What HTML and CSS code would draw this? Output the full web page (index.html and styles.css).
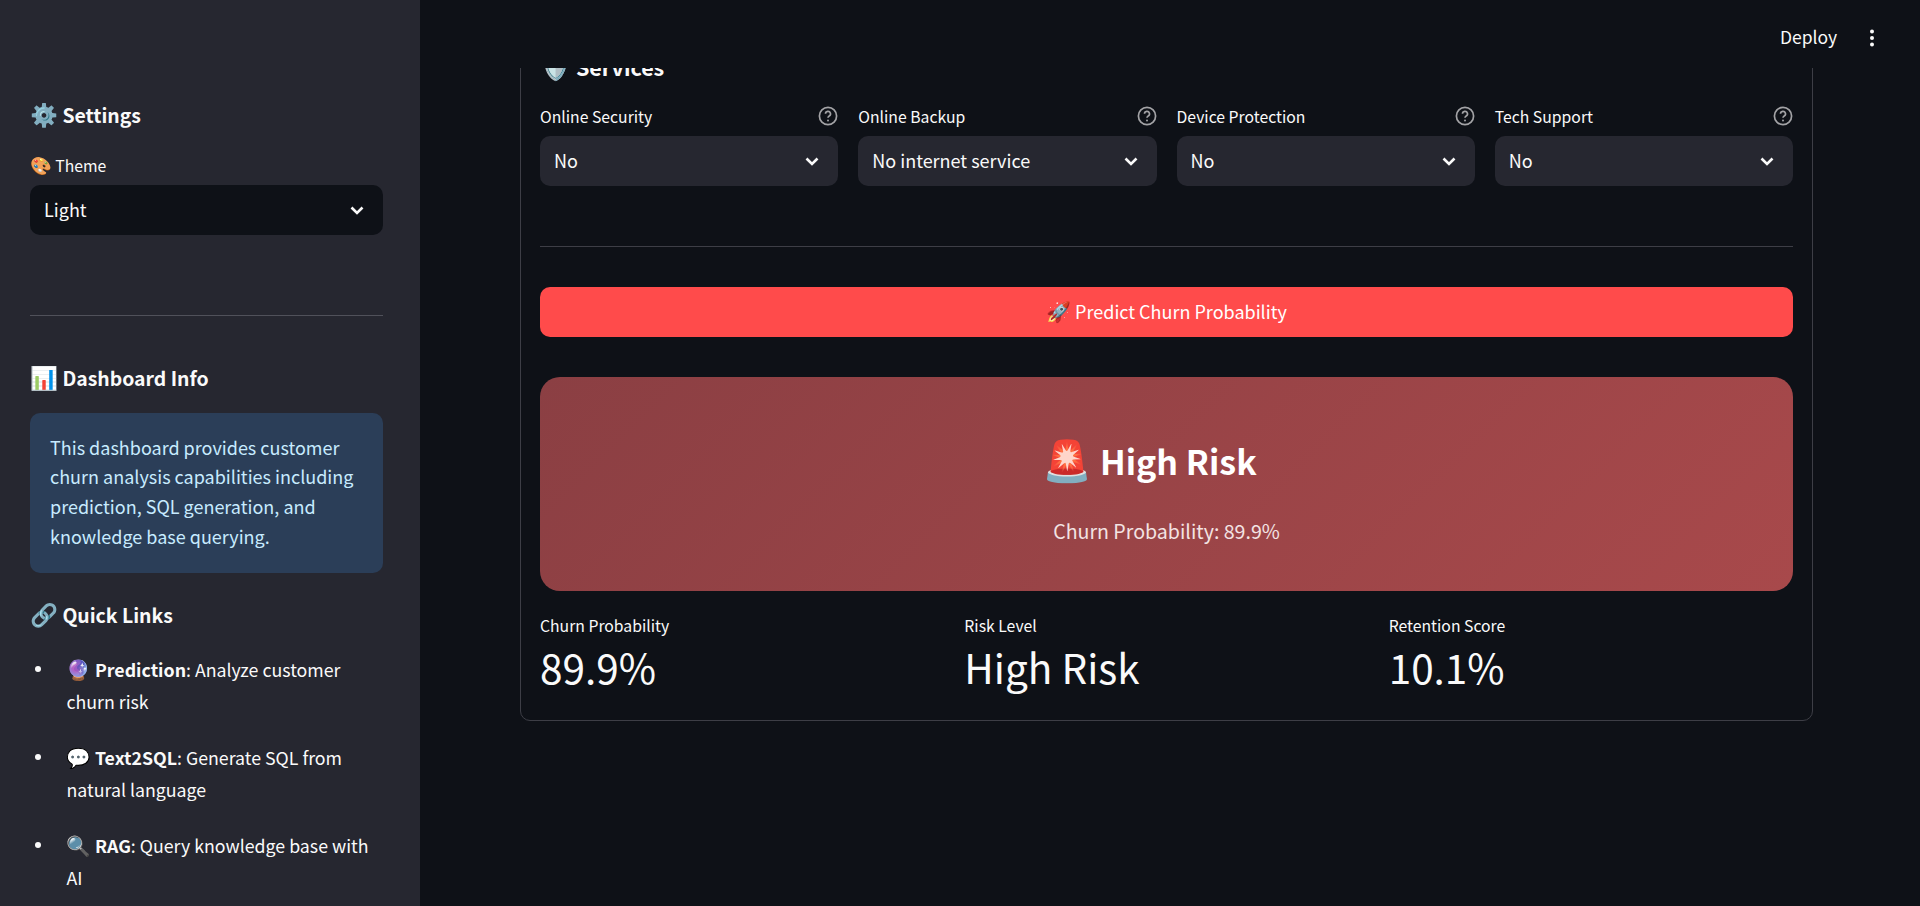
FILE: index.html
```html
<!DOCTYPE html>
<html lang="en">
<head>
<meta charset="utf-8">
<title>Customer Churn Dashboard</title>
<link rel="stylesheet" href="styles.css">
</head>
<body>
<div class="app">
  <aside class="sidebar">
    <h3 class="side-heading first"><span class="emoji">⚙️</span> Settings</h3>
    <label class="side-label"><span class="emoji">🎨</span> Theme</label>
    <div class="select select-dark"><span>Light</span>
      <svg class="chev" viewBox="0 0 24 24"><path d="M6.5 9.5 12 15l5.5-5.5"/></svg></div>
    <hr class="side-rule">
    <h3 class="side-heading"><span class="emoji">📊</span> Dashboard Info</h3>
    <div class="info">This dashboard provides customer churn analysis capabilities including prediction, SQL generation, and knowledge base querying.</div>
    <h3 class="side-heading links"><span class="emoji">🔗</span> Quick Links</h3>
    <ul class="links-list">
      <li><span class="emoji">🔮</span> <strong>Prediction</strong>: Analyze customer churn risk</li>
      <li><span class="emoji">💬</span> <strong>Text2SQL</strong>: Generate SQL from natural language</li>
      <li><span class="emoji">🔍</span> <strong>RAG</strong>: Query knowledge base with AI</li>
    </ul>
  </aside>
  <main class="main">
    <header class="topbar">
      <span class="deploy">Deploy</span>
      <svg class="kebab" viewBox="0 0 6 20"><circle cx="3" cy="3.5" r="2"/><circle cx="3" cy="10" r="2"/><circle cx="3" cy="16.5" r="2"/></svg>
    </header>
    <section class="card">
      <h3 class="services"><span class="emoji">🛡️</span> Services</h3>
      <div class="fields">
        <div class="field">
          <div class="field-label"><span>Online Security</span><svg class="help" viewBox="0 0 20 20"><circle cx="10" cy="10" r="8.6"/><path d="M7.5 7.8a2.5 2.5 0 1 1 3.7 2.2c-.8.5-1.2 1-1.2 1.8"/><circle class="dot" cx="10" cy="14.6" r="1"/></svg></div>
          <div class="select"><span>No</span><svg class="chev" viewBox="0 0 24 24"><path d="M6.5 9.5 12 15l5.5-5.5"/></svg></div>
        </div>
        <div class="field">
          <div class="field-label"><span>Online Backup</span><svg class="help" viewBox="0 0 20 20"><circle cx="10" cy="10" r="8.6"/><path d="M7.5 7.8a2.5 2.5 0 1 1 3.7 2.2c-.8.5-1.2 1-1.2 1.8"/><circle class="dot" cx="10" cy="14.6" r="1"/></svg></div>
          <div class="select"><span>No internet service</span><svg class="chev" viewBox="0 0 24 24"><path d="M6.5 9.5 12 15l5.5-5.5"/></svg></div>
        </div>
        <div class="field">
          <div class="field-label"><span>Device Protection</span><svg class="help" viewBox="0 0 20 20"><circle cx="10" cy="10" r="8.6"/><path d="M7.5 7.8a2.5 2.5 0 1 1 3.7 2.2c-.8.5-1.2 1-1.2 1.8"/><circle class="dot" cx="10" cy="14.6" r="1"/></svg></div>
          <div class="select"><span>No</span><svg class="chev" viewBox="0 0 24 24"><path d="M6.5 9.5 12 15l5.5-5.5"/></svg></div>
        </div>
        <div class="field">
          <div class="field-label"><span>Tech Support</span><svg class="help" viewBox="0 0 20 20"><circle cx="10" cy="10" r="8.6"/><path d="M7.5 7.8a2.5 2.5 0 1 1 3.7 2.2c-.8.5-1.2 1-1.2 1.8"/><circle class="dot" cx="10" cy="14.6" r="1"/></svg></div>
          <div class="select"><span>No</span><svg class="chev" viewBox="0 0 24 24"><path d="M6.5 9.5 12 15l5.5-5.5"/></svg></div>
        </div>
      </div>
      <hr class="rule">
      <button class="predict"><span class="emoji">🚀</span> Predict Churn Probability</button>
      <div class="risk">
        <h2 class="risk-title"><span class="emoji">🚨</span> High Risk</h2>
        <p class="risk-sub">Churn Probability: 89.9%</p>
      </div>
      <div class="metrics">
        <div class="metric"><div class="metric-label">Churn Probability</div><div class="metric-value">89.9%</div></div>
        <div class="metric"><div class="metric-label">Risk Level</div><div class="metric-value">High Risk</div></div>
        <div class="metric"><div class="metric-label">Retention Score</div><div class="metric-value">10.1%</div></div>
      </div>
    </section>
  </main>
</div>
</body>
</html>
```
FILE: styles.css
```css
* { box-sizing: border-box; }
html, body { margin: 0; height: 100%; }
body {
  background: #0e1117;
  color: #fafafa;
  font-family: "Noto Sans CJK SC", "Source Sans Pro", "Noto Sans", sans-serif;
  font-size: 18px;
  overflow: hidden;
}
.emoji { font-family: "Noto Color Emoji", "Noto Sans CJK SC", sans-serif; font-size: 1.11em; line-height: 0; }
.app { display: flex; height: 906px; overflow: hidden; }

/* Sidebar */
.sidebar {
  flex: 0 0 420px;
  height: 906px;
  overflow: hidden;
  background: #262730;
  padding: 97px 37px 0 30px;
}
.side-heading {
  margin: 0;
  font-size: 19.4px;
  line-height: 36px;
  font-weight: 600;
  color: #fafafa;
}
.side-heading .emoji { font-size: 1.16em; }
.side-label {
  display: block;
  margin-top: 19px;
  font-size: 15.75px;
  line-height: 28px;
}
.select {
  display: flex;
  align-items: center;
  justify-content: space-between;
  height: 50px;
  padding: 0 14px;
  background: #262730;
  border-radius: 10px;
  font-size: 18px;
}
.select span { padding-bottom: 2px; }
.select-dark { background: #0e1117; margin-top: 5px; }
.chev { width: 24px; height: 24px; fill: none; stroke: #fafafa; stroke-width: 2.6; }
.side-rule { margin: 80px 0 44px; border: 0; border-top: 1px solid #50515a; }
.info {
  margin-top: 17px;
  padding: 19.5px 20px 21.5px;
  background: #2b3e58;
  color: #c7ebff;
  border-radius: 10px;
  font-size: 18px;
  line-height: 29.75px;
}
.links { margin-top: 24px; }
.links-list { list-style: none; margin: 20px 0 0; padding: 0 0 0 36.5px; font-size: 17.75px; line-height: 32px; }
.links-list li { position: relative; margin-bottom: 24px; }
.links-list li::before {
  content: "";
  position: absolute;
  left: -31.5px;
  top: 13px;
  width: 6px;
  height: 6px;
  border-radius: 50%;
  background: #fafafa;
}
.links-list strong { font-weight: 600; }

/* Main */
.main { position: relative; flex: 1 1 auto; height: 906px; overflow: hidden; padding: 40px 107px 0 100px; }
.topbar {
  position: absolute;
  top: 0; left: 0; right: 0;
  height: 68px;
  background: #0e1117;
  z-index: 2;
}
.deploy { position: absolute; left: 1360px; top: 23px; font-size: 17.5px; line-height: 28px; }
.kebab { position: absolute; left: 1449px; top: 28px; width: 6px; height: 20px; fill: #fafafa; }
.card {
  border: 1px solid #3d3e46;
  border-radius: 10px;
  padding: 10px 19px 0;
  height: 681px;
}
.services { margin: 0; font-size: 21.5px; line-height: 32px; font-weight: 600; }
.services .emoji { font-size: 1.16em; }
.fields { display: grid; grid-template-columns: repeat(4, 1fr); gap: 20px; margin-top: 15px; }
.field-label { display: flex; align-items: center; justify-content: space-between; height: 35px; margin-bottom: 3px; font-size: 15.75px; }
.field-label span { padding-top: 1px; }
.help { width: 20px; height: 20px; fill: none; stroke: #a3a3a6; stroke-width: 1.7; }
.help .dot { fill: #a3a3a6; stroke: none; }
.rule { margin: 60px 0 0; border: 0; border-top: 1px solid #3d3e46; }
.predict {
  display: block;
  width: 100%;
  height: 50px;
  margin-top: 40px;
  padding: 0 0 2px;
  border: 0;
  border-radius: 10px;
  background: #ff4b4b;
  color: #fff;
  font: inherit;
  font-size: 18px;
}
.risk {
  margin-top: 40px;
  height: 214px;
  padding-top: 58px;
  border-radius: 20px;
  background: linear-gradient(135deg, #8b3f43, #a8494b);
  text-align: center;
}
.risk-title { margin: 0; padding-right: 34px; font-size: 34px; line-height: 52px; font-weight: 600; color: #fff; }
.risk-title .emoji { font-size: 1.18em; }
.risk-sub { margin: 28px 0 0; font-size: 19.6px; line-height: 32px; color: #f3e3e3; }
.metrics { display: grid; grid-template-columns: repeat(3, 1fr); gap: 20px; margin-top: 21px; }
.metric-label { font-size: 15.75px; line-height: 28px; }
.metric-value { font-size: 40.5px; line-height: 60px; margin-top: -3px; }
```
